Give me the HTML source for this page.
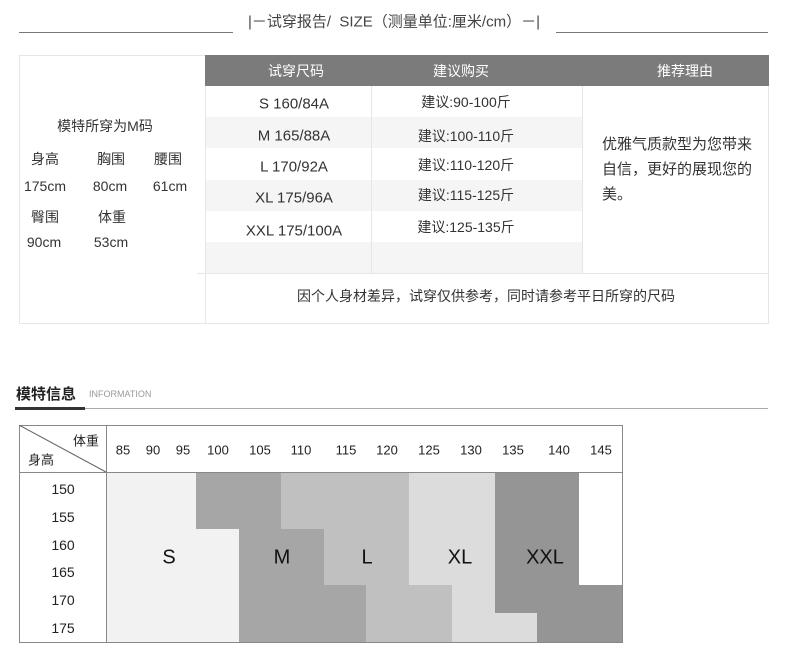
<!DOCTYPE html>
<html><head><meta charset="utf-8"><style>
*{margin:0;padding:0;box-sizing:border-box}
body{width:790px;height:667px;background:#fff;position:relative;overflow:hidden;font-family:"Liberation Sans","Noto Sans CJK SC",sans-serif;color:#333}
.a{position:absolute}
.t{position:absolute;white-space:nowrap;transform:translate(-50%,-50%)}
.b{position:absolute}
</style></head><body>
<div class="a" style="left:19px;top:32px;width:214px;height:1px;background:#777"></div>
<div class="a" style="left:556px;top:32px;width:212px;height:1px;background:#777"></div>
<div class="t" style="left:394px;top:21px;font-size:15px;color:#444">|－试穿报告/&nbsp; SIZE（测量单位:厘米/cm）－|</div>

<div class="a" style="left:19px;top:55px;width:750px;height:269px;border:1px solid #e6e6e6"></div>
<div class="a" style="left:205px;top:55px;width:564px;height:31px;background:#7b7b7b"></div>
<div class="t" style="left:296px;top:71px;color:#fff;font-size:14px">试穿尺码</div>
<div class="t" style="left:461px;top:71px;color:#fff;font-size:14px">建议购买</div>
<div class="t" style="left:685px;top:71px;color:#fff;font-size:14px">推荐理由</div>
<div class="a" style="left:205px;top:117px;width:377px;height:31px;background:#f5f5f5"></div>
<div class="a" style="left:205px;top:180px;width:377px;height:31px;background:#f5f5f5"></div>
<div class="a" style="left:205px;top:242px;width:377px;height:31px;background:#f5f5f5"></div>
<div class="a" style="left:205px;top:86px;width:1px;height:238px;background:#e6e6e6"></div>
<div class="a" style="left:371px;top:86px;width:1px;height:187px;background:#e6e6e6"></div>
<div class="a" style="left:582px;top:86px;width:1px;height:187px;background:#e6e6e6"></div>
<div class="a" style="left:197px;top:273px;width:572px;height:1px;background:#e6e6e6"></div>
<div class="t" style="left:294px;top:104px;font-size:15px">S 160/84A</div>
<div class="t" style="left:294px;top:136px;font-size:15px">M 165/88A</div>
<div class="t" style="left:294px;top:167px;font-size:15px">L 170/92A</div>
<div class="t" style="left:294px;top:198px;font-size:15px">XL 175/96A</div>
<div class="t" style="left:294px;top:231px;font-size:15px">XXL 175/100A</div>
<div class="t" style="left:466px;top:102px;font-size:14px">建议:90-100斤</div>
<div class="t" style="left:466px;top:136px;font-size:14px">建议:100-110斤</div>
<div class="t" style="left:466px;top:165px;font-size:14px">建议:110-120斤</div>
<div class="t" style="left:466px;top:195px;font-size:14px">建议:115-125斤</div>
<div class="t" style="left:466px;top:227px;font-size:14px">建议:125-135斤</div>
<div class="a" style="left:602px;top:132px;font-size:15px;line-height:25px;width:153px">优雅气质款型为您带来自信，更好的展现您的美。</div>
<div class="t" style="left:486px;top:296px;font-size:14px">因个人身材差异，试穿仅供参考，同时请参考平日所穿的尺码</div>
<div class="t" style="left:105px;top:126px;font-size:14px">模特所穿为M码</div>
<div class="t" style="left:45px;top:159px;font-size:14px">身高</div>
<div class="t" style="left:111px;top:159px;font-size:14px">胸围</div>
<div class="t" style="left:168px;top:159px;font-size:14px">腰围</div>
<div class="t" style="left:45px;top:186px;font-size:14px">175cm</div>
<div class="t" style="left:110px;top:186px;font-size:14px">80cm</div>
<div class="t" style="left:170px;top:186px;font-size:14px">61cm</div>
<div class="t" style="left:45px;top:217px;font-size:14px">臀围</div>
<div class="t" style="left:112px;top:217px;font-size:14px">体重</div>
<div class="t" style="left:44px;top:242px;font-size:14px">90cm</div>
<div class="t" style="left:111px;top:242px;font-size:14px">53cm</div>

<div class="a" style="left:16px;top:383px;font-size:15px;font-weight:bold;color:#222">模特信息</div>
<div class="a" style="left:89px;top:389px;font-size:9px;color:#999">INFORMATION</div>
<div class="a" style="left:15px;top:408px;width:753px;height:1px;background:#aaa"></div>
<div class="a" style="left:15px;top:407px;width:70px;height:3px;background:#333"></div>

<div class="b" style="left:107px;top:472px;width:89px;height:57px;background:#f2f2f2"></div>
<div class="b" style="left:107px;top:529px;width:132px;height:113px;background:#f2f2f2"></div>
<div class="b" style="left:196px;top:472px;width:85px;height:57px;background:#a6a6a6"></div>
<div class="b" style="left:239px;top:529px;width:85px;height:56px;background:#a6a6a6"></div>
<div class="b" style="left:239px;top:585px;width:127px;height:57px;background:#a6a6a6"></div>
<div class="b" style="left:281px;top:472px;width:128px;height:57px;background:#c0c0c0"></div>
<div class="b" style="left:324px;top:529px;width:85px;height:56px;background:#c0c0c0"></div>
<div class="b" style="left:366px;top:585px;width:86px;height:57px;background:#c0c0c0"></div>
<div class="b" style="left:409px;top:472px;width:86px;height:113px;background:#dcdcdc"></div>
<div class="b" style="left:452px;top:585px;width:43px;height:28px;background:#dcdcdc"></div>
<div class="b" style="left:452px;top:613px;width:85px;height:29px;background:#dcdcdc"></div>
<div class="b" style="left:495px;top:472px;width:84px;height:113px;background:#959595"></div>
<div class="b" style="left:495px;top:585px;width:127px;height:28px;background:#959595"></div>
<div class="b" style="left:537px;top:613px;width:85px;height:29px;background:#959595"></div>
<div class="a" style="left:19px;top:425px;width:604px;height:218px;border:1px solid #888"></div>
<div class="a" style="left:19px;top:472px;width:604px;height:1px;background:#888"></div>
<div class="a" style="left:106px;top:425px;width:1px;height:218px;background:#888"></div>
<svg class="a" style="left:19px;top:425px" width="88" height="48"><line x1="0" y1="0" x2="87" y2="47" stroke="#666" stroke-width="1"/></svg>
<div class="t" style="left:86px;top:440px;font-size:13px;color:#222">体重</div>
<div class="t" style="left:41px;top:459px;font-size:13px;color:#222">身高</div>
<div class="t" style="left:123px;top:450px;font-size:13px;color:#222">85</div>
<div class="t" style="left:153px;top:450px;font-size:13px;color:#222">90</div>
<div class="t" style="left:183px;top:450px;font-size:13px;color:#222">95</div>
<div class="t" style="left:218px;top:450px;font-size:13px;color:#222">100</div>
<div class="t" style="left:260px;top:450px;font-size:13px;color:#222">105</div>
<div class="t" style="left:301px;top:450px;font-size:13px;color:#222">110</div>
<div class="t" style="left:346px;top:450px;font-size:13px;color:#222">115</div>
<div class="t" style="left:387px;top:450px;font-size:13px;color:#222">120</div>
<div class="t" style="left:429px;top:450px;font-size:13px;color:#222">125</div>
<div class="t" style="left:471px;top:450px;font-size:13px;color:#222">130</div>
<div class="t" style="left:513px;top:450px;font-size:13px;color:#222">135</div>
<div class="t" style="left:559px;top:450px;font-size:13px;color:#222">140</div>
<div class="t" style="left:601px;top:450px;font-size:13px;color:#222">145</div>
<div class="t" style="left:63px;top:489px;font-size:14px;color:#222">150</div>
<div class="t" style="left:63px;top:517px;font-size:14px;color:#222">155</div>
<div class="t" style="left:63px;top:545px;font-size:14px;color:#222">160</div>
<div class="t" style="left:63px;top:572px;font-size:14px;color:#222">165</div>
<div class="t" style="left:63px;top:600px;font-size:14px;color:#222">170</div>
<div class="t" style="left:63px;top:628px;font-size:14px;color:#222">175</div>
<div class="t" style="left:169px;top:558px;font-size:20px;color:#111">S</div>
<div class="t" style="left:282px;top:558px;font-size:20px;color:#111">M</div>
<div class="t" style="left:367px;top:558px;font-size:20px;color:#111">L</div>
<div class="t" style="left:460px;top:558px;font-size:20px;color:#111">XL</div>
<div class="t" style="left:545px;top:558px;font-size:20px;color:#111">XXL</div>
</body></html>
